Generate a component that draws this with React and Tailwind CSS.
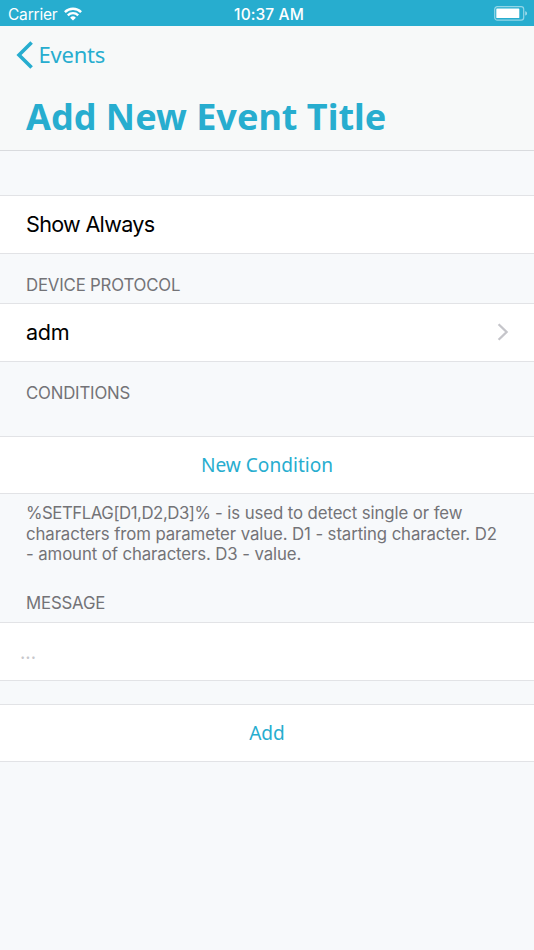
import React, { useState } from "react";

const StatusBar = () => (
    <div className="h-[26px] px-2 bg-[#27adcf] text-white text-[15.5px] grid grid-cols-3 items-center">
        <div className="flex items-center gap-[7px]">
            <span className="tracking-[-0.2px] leading-[26px] pt-[2px]">Carrier</span>
            <svg className="w-[18px] h-[14px]" viewBox="0 0 18 14" fill="none" stroke="currentColor" strokeWidth="2.4">
                <path d="M0.9 5.1a11.5 11.5 0 0 1 16.2 0" />
                <path d="M3.8 8.3a7.4 7.4 0 0 1 10.4 0" />
                <path d="M9 13.6l-2.9-2.9a4.1 4.1 0 0 1 5.8 0z" fill="currentColor" stroke="none" />
            </svg>
        </div>
        <div className="text-center font-medium leading-[26px] pt-[2px] pl-1 tracking-[0.1px] whitespace-nowrap">
            10:37 AM
        </div>
        <svg className="w-[34px] h-[15px] justify-self-end -mr-[2px] -mt-px" viewBox="0 0 34 15">
            <rect x="0.7" y="0.7" width="29" height="13.4" rx="2.6" fill="none" stroke="white" strokeOpacity="0.5" strokeWidth="1.2" />
            <rect x="2.3" y="2.5" width="23" height="9.6" rx="0.6" fill="white" />
            <path d="M31.4 5.2c1.9 0.6 1.9 3.8 0 4.4z" fill="white" fillOpacity="0.7" />
        </svg>
    </div>
);

const Header = () => (
    <header className="h-[125px] bg-[#f7f9f9] border-b border-[#d9dbde] font-['Noto_Sans',sans-serif] text-[#27adcf]">
        <button className="flex items-center h-[57px] pl-4">
            <svg className="w-[18px] h-[28px]" viewBox="0 0 18 28" fill="none" stroke="currentColor" strokeWidth="3.6">
                <path d="M15.6 1.4L3 14l12.6 12.6" />
            </svg>
            <span className="text-[22px] leading-[30px] pl-[4.5px] pb-[2px] tracking-[-0.2px]">Events</span>
        </button>
        <h1 className="pl-[26px] pt-[10px] text-[36px] leading-[48px] font-bold tracking-[0.02px] whitespace-nowrap">
            Add New Event Title
        </h1>
    </header>
);

const SectionTitle = ({ children }) => (
    <div className="pl-[26px] text-[16.8px] leading-[20px] tracking-[-0.18px] text-[#737377]">{children}</div>
);

const Row = ({ children, onClick }) => (
    <div
        className="h-[59px] bg-white border-y border-[#e2e3e6] pl-[26px] pr-[25px] flex items-center justify-between text-[21.6px] leading-[30px] text-black"
        onClick={onClick}
    >
        {children}
    </div>
);

const ButtonRow = ({ children, onClick }) => (
    <button
        className="block w-full h-[58px] bg-white border-y border-[#e2e3e6] font-['Noto_Sans',sans-serif] text-[19.1px] text-[#27adcf]"
        onClick={onClick}
    >
        {children}
    </button>
);

const App = () => {
    const [message, setMessage] = useState("");

    return (
        <div className="w-[534px] h-[950px] overflow-hidden bg-[#f7f9fb] font-[Inter,sans-serif]">
            <StatusBar />
            <Header />
            <div className="pt-[44px]">
                <Row>
                    <span className="tracking-[-0.7px] pb-[2px]">Show Always</span>
                </Row>
            </div>
            <div className="h-[49px] pt-[21px]">
                <SectionTitle>DEVICE PROTOCOL</SectionTitle>
            </div>
            <Row>
                <span className="tracking-[-0.3px] pb-px">adm</span>
                <svg className="w-[12px] h-[18px] -mt-px" viewBox="0 0 12 18" fill="none" stroke="#c5c5ca" strokeWidth="2.3">
                    <path d="M1.6 1.2L9.6 9l-8 7.8" />
                </svg>
            </Row>
            <div className="h-[74px] pt-[21px]">
                <SectionTitle>CONDITIONS</SectionTitle>
            </div>
            <ButtonRow>New Condition</ButtonRow>
            <p className="h-[99px] pl-[26px] pt-[9px] text-[16.8px] leading-[20.7px] tracking-[-0.1px] text-[#737377] whitespace-nowrap">
                <span className="tracking-[-0.46px]">%SETFLAG[D1,D2,D3]%</span> - is used to detect single or few
                <br />
                characters from parameter value. D1 - starting character. D2
                <br />
                - amount of characters. D3 - value.
            </p>
            <SectionTitle>MESSAGE</SectionTitle>
            <div className="mt-[9px] h-[59px] bg-white border-y border-[#e2e3e6]">
                <input
                    className="w-full h-full px-5 outline-none text-[18.5px] placeholder:text-[#c7c7cc]"
                    placeholder="..."
                    value={message}
                    onChange={(e) => setMessage(e.target.value)}
                />
            </div>
            <div className="pt-[23px]">
                <ButtonRow>Add</ButtonRow>
            </div>
        </div>
    );
};

export default App;
